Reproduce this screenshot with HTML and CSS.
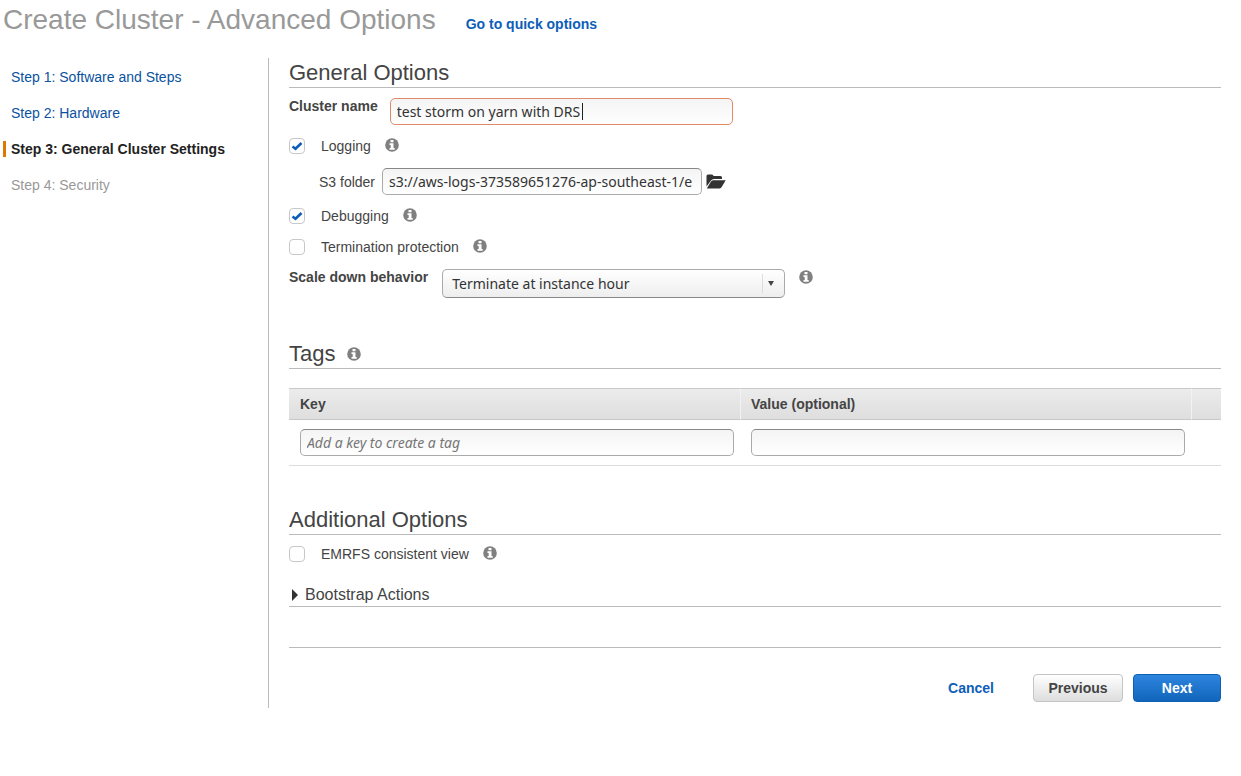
FILE: index.html
```html
<!DOCTYPE html>
<html lang="en">
<head>
<meta charset="utf-8">
<title>Create Cluster - Advanced Options</title>
<link rel="stylesheet" href="styles.css">
</head>
<body>
<svg class="defs" width="0" height="0" aria-hidden="true">
  <symbol id="info" viewBox="0 0 14 14">
    <circle cx="7" cy="7" r="6.8" fill="#808080"/>
    <path d="M5.500 2h3v2.300h-3zM4.500 5.200h4v4.800h1.200v1.800H4.500V10h1.200V7H4.500z" fill="#fff"/>
  </symbol>
</svg>
<header class="page-header">
  <h1 class="page-title">Create Cluster - Advanced Options</h1>
  <a class="strong-link" href="#quick">Go to quick options</a>
</header>
<div class="layout">
  <nav class="steps" aria-label="Steps">
    <a class="step" href="#step1">Step 1: Software and Steps</a>
    <a class="step" href="#step2">Step 2: Hardware</a>
    <span class="step step-current" aria-current="step">Step 3: General Cluster Settings</span>
    <span class="step step-disabled">Step 4: Security</span>
  </nav>
  <main class="content">
    <section class="general">
      <h2 class="heading">General Options</h2>
      <div class="field-row">
        <label class="field-label" for="name">Cluster name</label>
        <span class="name-field">
          <input class="text-input text-input-active" id="name" type="text" value="test storm on yarn with DRS">
          <span class="caret"></span>
        </span>
      </div>
      <div class="check-row">
        <input class="check" id="logging" type="checkbox" checked>
        <label for="logging">Logging</label>
        <svg class="info"><use href="#info"/></svg>
      </div>
      <div class="folder-row">
        <label for="folder">S3 folder</label>
        <input class="text-input folder-input" id="folder" type="text" value="s3://aws-logs-373589651276-ap-southeast-1/e">
        <button class="folder-button" type="button" aria-label="Browse">
          <svg width="20" height="16" viewBox="0 0 20 16">
            <path d="M.5 12.500V2Q.5.500 2 .5h4Q7.300.5 7.500 2h7Q16 2 16 3.500V5H8Q6 5 5 6.500z" fill="#333"/>
            <path d="M.8 14.500l4.200-7Q6 6.300 7.500 6.300h12.200L16 12.500Q15 14.500 13.500 14.500z" fill="#333"/>
          </svg>
        </button>
      </div>
      <div class="check-row">
        <input class="check" id="debugging" type="checkbox" checked>
        <label for="debugging">Debugging</label>
        <svg class="info"><use href="#info"/></svg>
      </div>
      <div class="check-row">
        <input class="check" id="termination" type="checkbox">
        <label for="termination">Termination protection</label>
        <svg class="info"><use href="#info"/></svg>
      </div>
      <div class="field-row scale-row">
        <label class="field-label" for="scale">Scale down behavior</label>
        <span class="select-wrap">
          <select class="select" id="scale">
            <option>Terminate at instance hour</option>
            <option>Terminate at task completion</option>
          </select>
          <span class="select-arrow"><svg width="6" height="5" viewBox="0 0 6 5"><path d="M0 0h6L3 5z" fill="#444"/></svg></span>
        </span>
        <svg class="info"><use href="#info"/></svg>
      </div>
    </section>
    <section class="tags">
      <h2 class="heading">Tags <svg class="info"><use href="#info"/></svg></h2>
      <table class="tag-table">
        <thead><tr><th class="tag-col">Key</th><th class="tag-col">Value (optional)</th><th></th></tr></thead>
        <tbody><tr>
          <td><input class="text-input tag-input" type="text" aria-label="Key" placeholder="Add a key to create a tag"></td>
          <td><input class="text-input tag-input" type="text" aria-label="Value (optional)"></td>
          <td></td>
        </tr></tbody>
      </table>
    </section>
    <section class="additional">
      <h2 class="heading">Additional Options</h2>
      <div class="check-row">
        <input class="check" id="emrfs" type="checkbox">
        <label for="emrfs">EMRFS consistent view</label>
        <svg class="info"><use href="#info"/></svg>
      </div>
      <button class="expander" type="button" aria-expanded="false">
        <svg width="6" height="12" viewBox="0 0 6 12"><path d="M0 0l6 6-6 6z" fill="#333"/></svg>
        Bootstrap Actions
      </button>
    </section>
    <footer class="actions">
      <a class="strong-link" href="#cancel">Cancel</a>
      <button class="button" type="button">Previous</button>
      <button class="button button-primary" type="button">Next</button>
    </footer>
  </main>
</div>
</body>
</html>
```
FILE: styles.css
```css
* { box-sizing: border-box; }
body {
  margin: 0;
  background: #fff;
  color: #444;
  font: 14px/16px "Liberation Sans", Arial, sans-serif;
}
.defs { position: absolute; }
a { color: #0d5eb8; text-decoration: none; }
.page-header {
  display: flex;
  align-items: baseline;
  gap: 30px;
  padding: 4px 3px 0;
  height: 58px;
}
.page-title {
  margin: 0;
  color: #999;
  font-size: 28px;
  font-weight: normal;
  line-height: 32px;
}
.strong-link { font-weight: bold; }
.layout { display: flex; }
.steps {
  display: flex;
  flex-direction: column;
  gap: 20px;
  width: 268px;
  padding: 11px 3px;
}
.step {
  border-left: 3px solid transparent;
  padding-left: 5px;
}
a.step { color: #0a52a0; }
.step-current {
  border-color: #e07700;
  color: #222;
  font-weight: bold;
}
.step-disabled { color: #999; }
.content {
  flex: 1;
  min-width: 0;
  border-left: 1px solid #bbb;
  padding: 0 20px 6px;
}
.heading {
  display: flex;
  align-items: center;
  gap: 12px;
  height: 30px;
  margin: 0;
  border-bottom: 1px solid #bbb;
  font-size: 22px;
  font-weight: normal;
  line-height: 29px;
}
.info {
  flex: none;
  width: 14px;
  height: 14px;
}
.field-row {
  display: flex;
  align-items: flex-start;
  gap: 12px;
  margin-top: 10px;
}
.field-label { font-weight: bold; }
.name-field, .select-wrap {
  position: relative;
  width: 343px;
}
.caret {
  position: absolute;
  top: 5px;
  left: 192px;
  width: 1px;
  height: 17px;
  background: #222;
}
.text-input {
  display: block;
  width: 100%;
  height: 27px;
  border: 1px solid #aaa;
  border-top-color: #888;
  border-radius: 5px;
  padding: 0 6px;
  background: linear-gradient(#f4f4f4, #fff);
  color: #333;
  font: 14px "Noto Sans", "Open Sans", sans-serif;
  outline: none;
}
.text-input::placeholder {
  color: #777;
  font-style: italic;
  opacity: 1;
}
.text-input-active { border-color: #e08a68; }
.check-row {
  display: flex;
  align-items: center;
  margin-top: 13px;
}
.check-row .info { margin: 0 0 2px 14px; }
.check {
  appearance: none;
  width: 16px;
  height: 16px;
  margin: 0 16px 0 0;
  border: 1px solid #c8c8c8;
  border-radius: 4px;
  background: #fff;
}
.check:checked {
  background: url("data:image/svg+xml,%3Csvg xmlns='http://www.w3.org/2000/svg' viewBox='0 0 14 14'%3E%3Cpath d='M2.500 7.500l3 2.300L11.500 4' fill='none' stroke='%230d5eb8' stroke-width='2.600'/%3E%3C/svg%3E");
}
.folder-row {
  display: flex;
  align-items: center;
  gap: 7px;
  margin: 14px 0 0 30px;
}
.folder-input { width: 320px; }
.folder-button {
  margin-left: -3px;
  border: 0;
  padding: 0;
  background: none;
}
.folder-button svg { display: block; }
.check-row + .check-row { margin-top: 15px; }
.scale-row {
  gap: 14px;
  margin-top: 14px;
}
.scale-row .info { margin-top: 1px; }
.select {
  appearance: none;
  display: block;
  width: 100%;
  height: 29px;
  border: 1px solid #aaa;
  border-bottom-color: #888;
  border-radius: 5px;
  padding: 0 30px 0 9px;
  background: linear-gradient(#fff, #eee);
  color: #333;
  font: 14px "Noto Sans", "Open Sans", sans-serif;
}
.select-arrow {
  position: absolute;
  top: 5px;
  right: 1px;
  display: flex;
  align-items: center;
  justify-content: center;
  width: 22px;
  height: 19px;
  padding-right: 6px;
  border-left: 1px solid #ddd;
  pointer-events: none;
}
.tags { margin-top: 41px; }
.tag-table {
  width: 100%;
  margin-top: 19px;
  border-collapse: separate;
  border-spacing: 0;
  table-layout: fixed;
}
.tag-table th {
  height: 32px;
  border: solid #c8c8c8;
  border-width: 1px 0;
  padding: 0 11px;
  background: linear-gradient(#ececec, #dedede);
  text-align: left;
}
.tag-table th + th {
  border-left: 1px solid #f2f2f2;
  padding-left: 10px;
}
.tag-col { width: 451px; }
.tag-table td {
  border-bottom: 1px solid #ddd;
  padding: 9px 6px 9px 11px;
}
.tag-input { max-width: 434px; }
.additional { margin-top: 39px; }
.additional .check-row { margin-top: 11px; }
.expander {
  display: flex;
  align-items: center;
  gap: 7px;
  width: 100%;
  height: 24px;
  margin-top: 21px;
  border: 0;
  border-bottom: 1px solid #bbb;
  padding: 1px 3px 0;
  background: none;
  color: #444;
  font: 16px/22px "Liberation Sans", Arial, sans-serif;
}
.actions {
  display: flex;
  align-items: center;
  justify-content: flex-end;
  gap: 10px;
  margin-top: 40px;
  border-top: 1px solid #bbb;
  padding-top: 26px;
}
.actions .strong-link { margin-right: 29px; }
.button {
  width: 90px;
  height: 28px;
  border: 1px solid #c4c4c4;
  border-radius: 4px;
  padding: 0;
  background: linear-gradient(#fff, #ddd);
  color: #444;
  font: bold 14px "Liberation Sans", Arial, sans-serif;
}
.button-primary {
  width: 88px;
  border-color: #0f5fb5;
  background: linear-gradient(#2e85de, #1166bb);
  color: #fff;
}
```
